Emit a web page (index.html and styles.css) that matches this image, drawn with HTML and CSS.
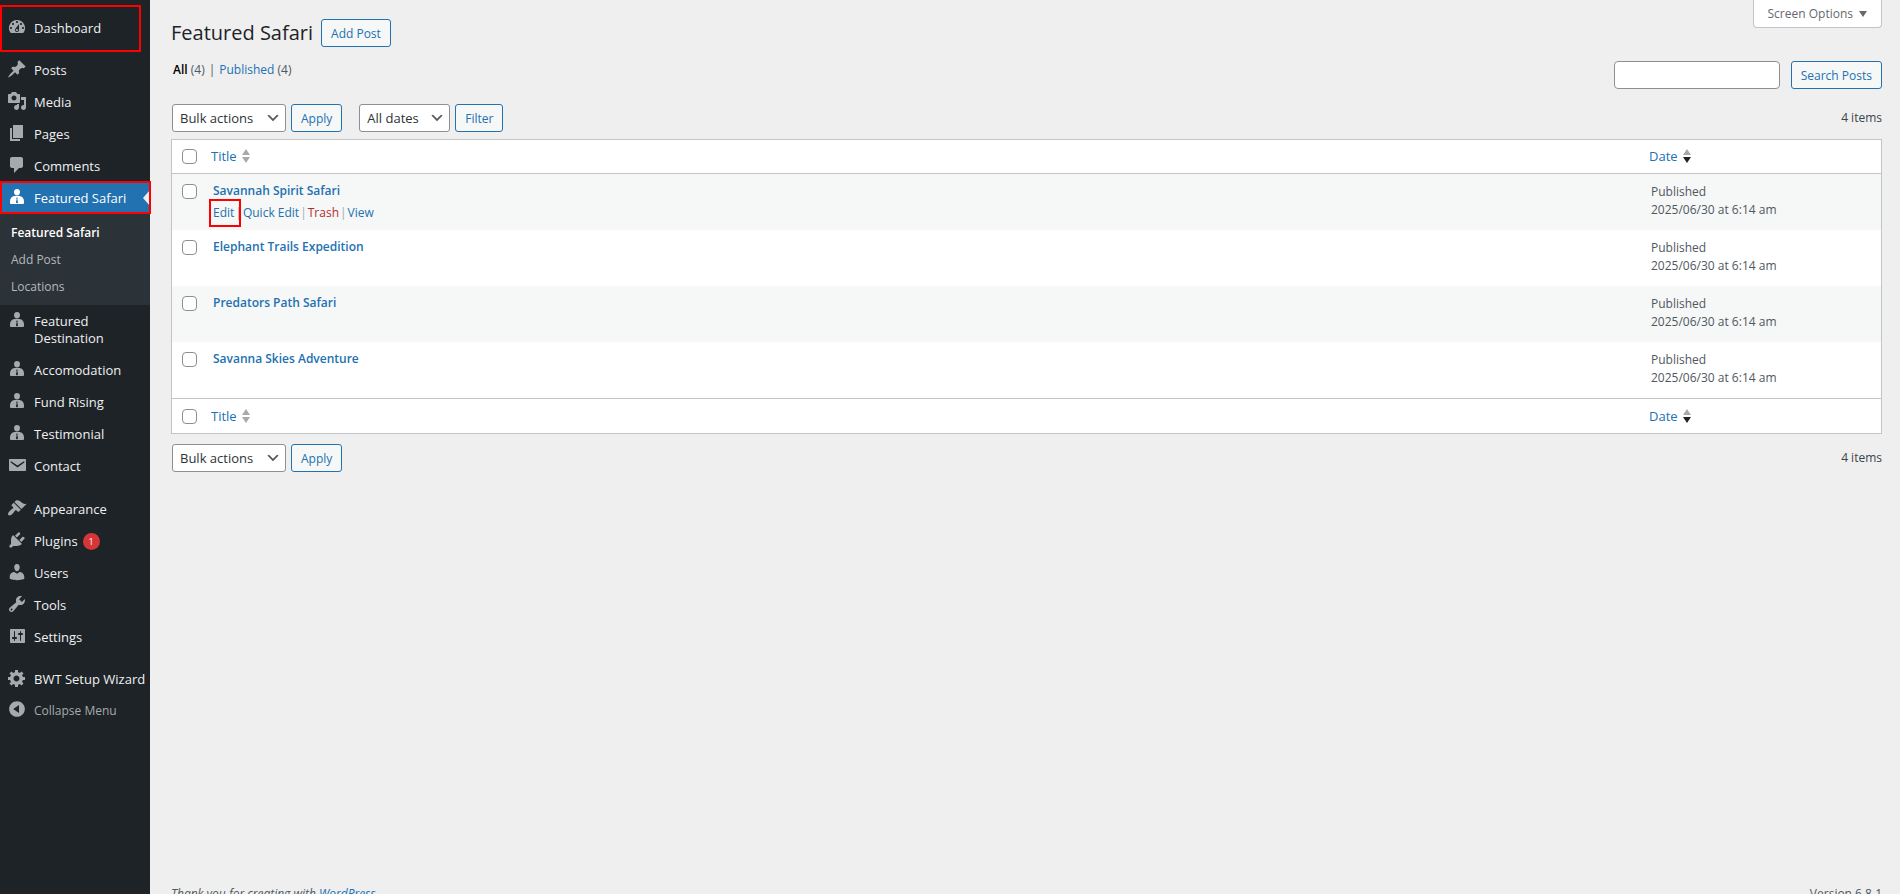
FILE: index.html
```html
<!DOCTYPE html>
<html lang="en">
<head>
<meta charset="utf-8">
<title>Featured Safari</title>
<link rel="stylesheet" href="styles.css">
</head>
<body>
<svg class="sprite" aria-hidden="true">
  <symbol id="i-dashboard" viewBox="0 0 20 20"><path d="M3.76 16h12.48A7.998 7.998 0 0 0 10 3a7.998 7.998 0 0 0-6.24 13zM10 4c.55 0 1 .45 1 1s-.45 1-1 1-1-.45-1-1 .45-1 1-1zM6 6c.55 0 1 .45 1 1s-.45 1-1 1-1-.45-1-1 .45-1 1-1zm8 0c.55 0 1 .45 1 1s-.45 1-1 1-1-.45-1-1 .45-1 1-1zm-5.37 5.55L12 7v6c0 1.1-.9 2-2 2s-2-.9-2-2c0-.57.24-1.08.63-1.45zM4 10c.55 0 1 .45 1 1s-.45 1-1 1-1-.45-1-1 .45-1 1-1zm12 0c.55 0 1 .45 1 1s-.45 1-1 1-1-.45-1-1 .45-1 1-1zm-5 3c0-.55-.45-1-1-1s-1 .45-1 1 .45 1 1 1 1-.45 1-1z"/></symbol>
  <symbol id="i-post" viewBox="0 0 20 20"><path d="M10.44 3.02l1.82-1.82 6.36 6.35-1.83 1.82c-1.05-.68-2.48-.57-3.41.36l-.75.75c-.92.93-1.04 2.35-.35 3.41l-1.83 1.82-2.41-2.41-2.8 2.79c-.42.42-3.38 2.71-3.8 2.29s1.86-3.39 2.28-3.81l2.79-2.79L4.1 9.36l1.83-1.82c1.05.69 2.48.57 3.4-.36l.75-.75c.93-.92 1.05-2.35.36-3.41z"/></symbol>
  <symbol id="i-media" viewBox="0 0 20 20"><path d="M13 11V4c0-.55-.45-1-1-1h-1.67L9 1H5L3.67 3H2c-.55 0-1 .45-1 1v7c0 .55.45 1 1 1h10c.55 0 1-.45 1-1zM7 4.5c1.38 0 2.5 1.12 2.5 2.5S8.38 9.5 7 9.5 4.5 8.38 4.5 7 5.62 4.5 7 4.5zM14 6h5v10.5c0 1.38-1.12 2.5-2.5 2.5S14 17.88 14 16.5s1.12-2.5 2.5-2.5c.17 0 .34.02.5.05V9h-3V6zm-4 8.05V13h2v3.5c0 1.38-1.12 2.5-2.5 2.5S7 17.88 7 16.5 8.12 14 9.5 14c.17 0 .34.02.5.05z"/></symbol>
  <symbol id="i-page" viewBox="0 0 20 20"><path d="M6 15V2h10v13H6zm-1 1h8v2H3V5h2v11z"/></symbol>
  <symbol id="i-comment" viewBox="0 0 20 20"><path d="M5 2h9c1.1 0 2 .9 2 2v7c0 1.1-.9 2-2 2h-2l-5 5v-5H5c-1.1 0-2-.9-2-2V4c0-1.1.9-2 2-2z"/></symbol>
  <symbol id="i-person" viewBox="0 0 20 20"><path d="M10 8.600c-2 0-3-1.900-3-3.700C7 3 8.200 2 10 2s3 1 3 2.900c0 1.800-1 3.700-3 3.700z"/><path fill-rule="evenodd" d="M7.500 9h5c2.800.4 4.500 2.600 4.500 5.200v1.600c0 .8-.5 1.200-1.200 1.200H4.200c-.7 0-1.200-.4-1.200-1.200v-1.600C3 11.600 4.700 9.400 7.500 9zM9 10.800l.7 1.200-.8 3.600L10 16.600l1.100-1-.8-3.600.7-1.200z"/></symbol>
  <symbol id="i-mail" viewBox="0 0 20 20"><path fill-rule="evenodd" d="M3 4h15c.7 0 1 .4 1 1v10c0 .7-.4 1-1 1H3c-.7 0-1-.3-1-1V5c0-.7.3-1 1-1zm.7 2v1.400l6.800 5 6.800-5V6l-6.800 4.600z"/></symbol>
  <symbol id="i-appearance" viewBox="0 0 20 20"><path d="M14.480 11.060L7.410 3.990l1.500-1.500c.5-.56 2.300-.47 3.510.32 1.210.8 1.430 1.280 2.910 2.100 1.180.64 2.450 1.260 4.450.85zm-.71.71L6.700 4.700 4.930 6.470c-.39.39-.39 1.020 0 1.410l1.060 1.060c.39.39.39 1.030 0 1.420-.6.6-1.430 1.110-2.210 1.690-.35.26-.7.53-1.010.84C1.430 14.230.4 16.080 1.400 17.070c.99 1 2.840-.03 4.180-1.360.31-.31.58-.66.85-1.020.57-.78 1.080-1.610 1.690-2.210.39-.39 1.020-.39 1.410 0l1.060 1.060c.39.39 1.020.39 1.410 0z"/></symbol>
  <symbol id="i-plugin" viewBox="0 0 20 20"><path d="M13.110 4.360L9.870 7.600 8 5.730l3.240-3.240c.35-.34 1.050-.2 1.560.32.52.51.66 1.210.31 1.550zm-8 1.770l.91-1.120 9.010 9.010-1.190.84c-.71.71-2.630 1.160-3.820 1.160H6.140L4.900 17.260c-.59.59-1.540.59-2.120 0-.59-.58-.59-1.530 0-2.120l1.240-1.240v-3.880c0-1.130.4-3.190 1.090-3.890zm7.260 3.970l3.240-3.240c.34-.35 1.040-.21 1.550.31.52.51.66 1.210.31 1.550l-3.240 3.250z"/></symbol>
  <symbol id="i-user" viewBox="0 0 20 20"><path d="M10 9.250c-2.270 0-2.730-3.440-2.730-3.440C7 4.020 7.820 2 9.970 2c2.160 0 2.980 2.020 2.710 3.810 0 0-.41 3.440-2.680 3.440zm0 2.570L12.720 10c2.390 0 4.520 2.330 4.520 4.530v2.490s-3.650 1.130-7.240 1.130c-3.650 0-7.240-1.130-7.240-1.130v-2.490c0-2.250 1.940-4.480 4.470-4.480z"/></symbol>
  <symbol id="i-tool" viewBox="0 0 20 20"><path d="M16.680 9.770c-1.340 1.340-3.300 1.670-4.950.99l-5.410 6.520c-.99.99-2.590.99-3.580 0s-.99-2.590 0-3.570l6.520-5.420c-.68-1.650-.35-3.610.99-4.950 1.280-1.280 3.120-1.620 4.720-1.060l-2.890 2.890 2.820 2.820 2.860-2.870c.53 1.580.18 3.390-1.080 4.650zM3.810 16.210c.4.39 1.040.39 1.430 0 .4-.4.4-1.040 0-1.430-.39-.4-1.030-.4-1.430 0-.39.39-.39 1.030 0 1.430z"/></symbol>
  <symbol id="i-settings" viewBox="0 0 20 20"><path d="M18 16V4c0-.55-.45-1-1-1H4c-.55 0-1 .45-1 1v12c0 .55.45 1 1 1h13c.55 0 1-.45 1-1zM8 11h1c.55 0 1 .45 1 1s-.45 1-1 1H8v1.500c0 .28-.22.5-.5.5s-.5-.22-.5-.5V13H6c-.55 0-1-.45-1-1s.45-1 1-1h1V5.500c0-.28.22-.5.5-.5s.5.22.5.5V11zm5-2h-1c-.55 0-1-.45-1-1s.45-1 1-1h1V5.500c0-.28.22-.5.5-.5s.5.22.5.5V7h1c.55 0 1 .45 1 1s-.45 1-1 1h-1v5.500c0 .28-.22.5-.5.5s-.5-.22-.5-.5V9z"/></symbol>
  <symbol id="i-gear" viewBox="0 0 20 20"><path d="M18 12h-2.180c-.17.7-.44 1.350-.81 1.930l1.540 1.540-2.100 2.100-1.540-1.540c-.58.36-1.230.63-1.910.79V19H8v-2.180c-.68-.16-1.330-.43-1.910-.79l-1.540 1.540-2.120-2.120 1.540-1.540c-.36-.58-.63-1.230-.79-1.910H1V9.030h2.170c.16-.7.44-1.350.8-1.940L2.430 5.550l2.100-2.100 1.540 1.540c.58-.37 1.240-.64 1.930-.81V2h3v2.180c.68.16 1.330.43 1.910.79l1.540-1.540 2.120 2.120-1.540 1.540c.36.59.64 1.240.8 1.940H18V12zm-8.500 1.500c1.660 0 3-1.340 3-3s-1.340-3-3-3-3 1.340-3 3 1.340 3 3 3z"/></symbol>
  <symbol id="i-collapse" viewBox="0 0 20 20"><path d="M10 2.160c4.330 0 7.840 3.510 7.840 7.840s-3.510 7.840-7.840 7.840S2.160 14.330 2.160 10 5.670 2.160 10 2.160zm2 11.720V6.120L6.180 9.970z"/></symbol>
  <symbol id="i-chevron" viewBox="0 0 20 20"><path d="M5 6l5 5 5-5 2 1-7 7-7-7z"/></symbol>
  <symbol id="i-up" viewBox="0 0 8 6"><path d="M4 0l4 6H0z"/></symbol>
  <symbol id="i-down" viewBox="0 0 8 6"><path d="M0 0h8L4 6z"/></symbol>
</svg>

<div class="admin">
  <nav class="sidebar" aria-label="Main menu">
    <ul class="menu">
      <li class="item marked-top"><a href="#"><svg class="icon"><use href="#i-dashboard"/></svg><span>Dashboard</span></a></li>
      <li class="separator narrow"></li>
      <li class="item"><a href="#"><svg class="icon"><use href="#i-post"/></svg><span>Posts</span></a></li>
      <li class="item"><a href="#"><svg class="icon"><use href="#i-media"/></svg><span>Media</span></a></li>
      <li class="item"><a href="#"><svg class="icon"><use href="#i-page"/></svg><span>Pages</span></a></li>
      <li class="item"><a href="#"><svg class="icon"><use href="#i-comment"/></svg><span>Comments</span></a></li>
      <li class="item current"><a href="#"><svg class="icon"><use href="#i-person"/></svg><span>Featured Safari</span></a></li>
      <li>
        <ul class="submenu">
          <li><a class="active" href="#">Featured Safari</a></li>
          <li><a href="#">Add Post</a></li>
          <li><a href="#">Locations</a></li>
        </ul>
      </li>
      <li class="item"><a href="#"><svg class="icon"><use href="#i-person"/></svg><span>Featured Destination</span></a></li>
      <li class="item"><a href="#"><svg class="icon"><use href="#i-person"/></svg><span>Accomodation</span></a></li>
      <li class="item"><a href="#"><svg class="icon"><use href="#i-person"/></svg><span>Fund Rising</span></a></li>
      <li class="item"><a href="#"><svg class="icon"><use href="#i-person"/></svg><span>Testimonial</span></a></li>
      <li class="item"><a href="#"><svg class="icon"><use href="#i-mail"/></svg><span>Contact</span></a></li>
      <li class="separator"></li>
      <li class="item"><a href="#"><svg class="icon"><use href="#i-appearance"/></svg><span>Appearance</span></a></li>
      <li class="item"><a href="#"><svg class="icon"><use href="#i-plugin"/></svg><span class="label">Plugins <span class="count">1</span></span></a></li>
      <li class="item"><a href="#"><svg class="icon"><use href="#i-user"/></svg><span>Users</span></a></li>
      <li class="item"><a href="#"><svg class="icon"><use href="#i-tool"/></svg><span>Tools</span></a></li>
      <li class="item"><a href="#"><svg class="icon"><use href="#i-settings"/></svg><span>Settings</span></a></li>
      <li class="separator narrow"></li>
      <li class="item"><a href="#"><svg class="icon"><use href="#i-gear"/></svg><span>BWT Setup Wizard</span></a></li>
      <li class="item"><button class="collapse" type="button"><svg class="icon"><use href="#i-collapse"/></svg><span>Collapse Menu</span></button></li>
    </ul>
  </nav>

  <main class="content">
    <div class="top">
      <div class="heading">
        <h1>Featured Safari</h1>
        <a class="button" href="#">Add Post</a>
      </div>
      <button class="screen-options" type="button">Screen Options <svg class="caret"><use href="#i-down"/></svg></button>
    </div>

    <div class="views">
      <div class="filters"><span><a class="all" href="#">All</a> (4)</span><span>|</span><span><a href="#">Published</a> (4)</span></div>
      <form class="search">
        <input type="search" aria-label="Search Posts">
        <button class="button" type="button">Search Posts</button>
      </form>
    </div>

    <div class="tablenav">
      <div class="select bulk"><select aria-label="Bulk actions"><option>Bulk actions</option></select><svg class="chevron"><use href="#i-chevron"/></svg></div>
      <button class="button" type="button">Apply</button>
      <div class="select dates"><select aria-label="Filter by date"><option>All dates</option></select><svg class="chevron"><use href="#i-chevron"/></svg></div>
      <button class="button" type="button">Filter</button>
      <span class="total">4 items</span>
    </div>

    <table class="posts">
      <thead>
        <tr>
          <th class="check"><input type="checkbox" aria-label="Select all"></th>
          <th><a class="sort" href="#">Title<span class="arrows"><svg><use href="#i-up"/></svg><svg><use href="#i-down"/></svg></span></a></th>
          <th class="date"><a class="sort desc" href="#">Date<span class="arrows"><svg><use href="#i-up"/></svg><svg><use href="#i-down"/></svg></span></a></th>
        </tr>
      </thead>
      <tbody>
        <tr>
          <td class="check"><input type="checkbox" aria-label="Select Savannah Spirit Safari"></td>
          <td><a class="title" href="#">Savannah Spirit Safari</a>
            <div class="actions"><a class="edit" href="#">Edit</a><span>|</span><a href="#">Quick Edit</a><span>|</span><a class="trash" href="#">Trash</a><span>|</span><a href="#">View</a></div></td>
          <td class="date">Published<br>2025/06/30 at 6:14 am</td>
        </tr>
        <tr>
          <td class="check"><input type="checkbox" aria-label="Select Elephant Trails Expedition"></td>
          <td><a class="title" href="#">Elephant Trails Expedition</a></td>
          <td class="date">Published<br>2025/06/30 at 6:14 am</td>
        </tr>
        <tr>
          <td class="check"><input type="checkbox" aria-label="Select Predators Path Safari"></td>
          <td><a class="title" href="#">Predators Path Safari</a></td>
          <td class="date">Published<br>2025/06/30 at 6:14 am</td>
        </tr>
        <tr>
          <td class="check"><input type="checkbox" aria-label="Select Savanna Skies Adventure"></td>
          <td><a class="title" href="#">Savanna Skies Adventure</a></td>
          <td class="date">Published<br>2025/06/30 at 6:14 am</td>
        </tr>
      </tbody>
      <tfoot>
        <tr>
          <th class="check"><input type="checkbox" aria-label="Select all"></th>
          <th><a class="sort" href="#">Title<span class="arrows"><svg><use href="#i-up"/></svg><svg><use href="#i-down"/></svg></span></a></th>
          <th class="date"><a class="sort desc" href="#">Date<span class="arrows"><svg><use href="#i-up"/></svg><svg><use href="#i-down"/></svg></span></a></th>
        </tr>
      </tfoot>
    </table>

    <div class="tablenav bottom">
      <div class="select bulk"><select aria-label="Bulk actions"><option>Bulk actions</option></select><svg class="chevron"><use href="#i-chevron"/></svg></div>
      <button class="button" type="button">Apply</button>
      <span class="total">4 items</span>
    </div>

    <footer class="footer">
      <em>Thank you for creating with <a href="#">WordPress</a>.</em>
      <span>Version 6.8.1</span>
    </footer>
  </main>
</div>
</body>
</html>
```
FILE: styles.css
```css
* { box-sizing: border-box; }

html, body { height: 100%; }

body {
  margin: 0;
  overflow: hidden;
  background: #efefef;
  color: #3c434a;
  font-family: "Open Sans", "Noto Sans", sans-serif;
  font-size: 12px;
  line-height: 18px;
}

a { color: #2271b1; text-decoration: none; }
ul { list-style: none; margin: 0; padding: 0; }
button, input, select { font: inherit; }
svg { fill: currentColor; }
.sprite { display: none; }

.admin { display: flex; min-height: calc(100% + 20px); }

/* Sidebar */
.sidebar {
  flex: 0 0 150px;
  padding-top: 12px;
  background: #1d2327;
  font-size: 13px;
  line-height: 17px;
}

.item { position: relative; }

.item > a, .collapse {
  display: flex;
  gap: 7px;
  width: 100%;
  padding: 8px 0 7px 7px;
  border: 0;
  background: none;
  color: #f0f0f1;
  text-align: left;
}

.icon {
  flex: none;
  width: 20px;
  height: 20px;
  margin: -3px 0 -2px;
  color: #a7aaad;
}

.item > .collapse { padding-top: 7px; color: #a7aaad; font-size: 12px; }
.separator { height: 11px; }
.narrow { height: 10px; }

.current > a { background: #2271b1; color: #fff; }
.current .icon { color: #fff; }

.current > a::after {
  content: "";
  position: absolute;
  right: 0;
  top: 8px;
  border: 8px solid transparent;
  border-right: 7px solid #efefef;
  border-left: 0;
}

.marked-top::after, .current::after {
  content: "";
  position: absolute;
  inset: -1px -1px 0 0;
  border: 2px solid #f00;
}
.marked-top::after { inset: -7px 9px -8px 0; }

.submenu { padding: 5px 0; background: #2c3338; font-size: 12px; }
.submenu a { display: block; padding: 5px 11px; color: #b4b8bc; }
.submenu .active { color: #fff; font-weight: 600; }

.label { display: flex; gap: 5px; }
.count {
  width: 17px;
  border-radius: 9px;
  background: #d63638;
  color: #fff;
  font-size: 9px;
  text-align: center;
}

/* Page header */
.content {
  flex: 1;
  display: flex;
  flex-direction: column;
  min-width: 0;
  padding: 0 18px 0 21px;
}

.top { display: flex; justify-content: space-between; align-items: flex-start; }
.heading { display: flex; align-items: center; gap: 8px; padding-top: 19px; }
h1 { margin: 0; color: #1d2327; font-size: 20px; font-weight: 400; line-height: 28px; }

.button {
  height: 28px;
  padding: 1px 9px 0;
  border: 1px solid #2271b1;
  border-radius: 3px;
  background: #f6f7f7;
  color: #2271b1;
  line-height: 25px;
  white-space: nowrap;
}

.screen-options {
  display: flex;
  align-items: center;
  gap: 6px;
  height: 28px;
  padding: 0 14px;
  border: 1px solid #c3c4c7;
  border-top: 0;
  border-radius: 0 0 4px 4px;
  background: #fff;
  color: #646970;
}
.caret { width: 8px; height: 6px; }

.views { display: flex; justify-content: space-between; align-items: flex-start; padding-top: 14px; }
.filters { display: flex; gap: 4px; padding-left: 2px; color: #50575e; }
.filters .all { color: #000; font-weight: 600; }

.search { display: flex; gap: 11px; }
.search input {
  width: 166px;
  height: 28px;
  border: 1px solid #8c8f94;
  border-radius: 4px;
  background: #fff;
}

/* Table controls */
.tablenav { display: flex; align-items: center; gap: 5px; padding: 15px 0 7px 1px; }
.select { position: relative; }
.select select {
  width: 100%;
  height: 28px;
  padding: 0 7px;
  border: 1px solid #8c8f94;
  border-radius: 3px;
  appearance: none;
  background: #fff;
  color: #2c3338;
  font-size: 13px;
  line-height: 26px;
}
.bulk { width: 114px; }
.dates { width: 91px; margin-left: 12px; }
.chevron {
  position: absolute;
  right: 5px;
  top: 6px;
  width: 16px;
  height: 16px;
  color: #50575e;
  pointer-events: none;
}
.total { align-self: flex-start; margin-left: auto; padding-top: 5px; }

/* Posts table */
.posts {
  width: 100%;
  border: 1px solid #c3c4c7;
  border-spacing: 0;
  background: #fff;
  table-layout: fixed;
}
th { height: 34px; padding: 0 8px 0 9px; font-weight: 400; text-align: left; }
td { height: 56px; padding: 8px 8px 0 11px; vertical-align: top; }
thead th { border-bottom: 1px solid #c3c4c7; }
tfoot th { height: 35px; border-top: 1px solid #c3c4c7; }
tbody tr:nth-child(odd) { background: #f6f7f7; }
.posts .check { width: 30px; padding-left: 10px; padding-right: 0; }
td.check { padding-top: 10px; }
.date { width: 241px; color: #50575e; }
td.date { padding-top: 9px; }

input[type="checkbox"] {
  display: block;
  width: 15px;
  height: 15px;
  margin: 0;
  border: 1px solid #8c8f94;
  border-radius: 4px;
  appearance: none;
  background: #fff;
}

.sort { display: inline-flex; align-items: center; gap: 5px; font-size: 13px; }
.arrows { display: flex; flex-direction: column; gap: 2px; color: #a7aaad; }
.arrows svg { width: 8px; height: 6px; }
.desc svg:last-child { color: #1d2327; }

.title { font-size: 12px; font-weight: 600; }
.actions { display: flex; gap: 1px; padding-top: 4px; color: #a7aaad; }
.trash { color: #b32d2e; }
.edit { position: relative; }
.edit::after {
  content: "";
  position: absolute;
  inset: -5px -7px -5px -4px;
  border: 2px solid #f00;
}

.bottom { padding-top: 10px; }

.footer {
  display: flex;
  justify-content: space-between;
  margin-top: auto;
  padding-bottom: 11px;
  color: #50575e;
}
```
